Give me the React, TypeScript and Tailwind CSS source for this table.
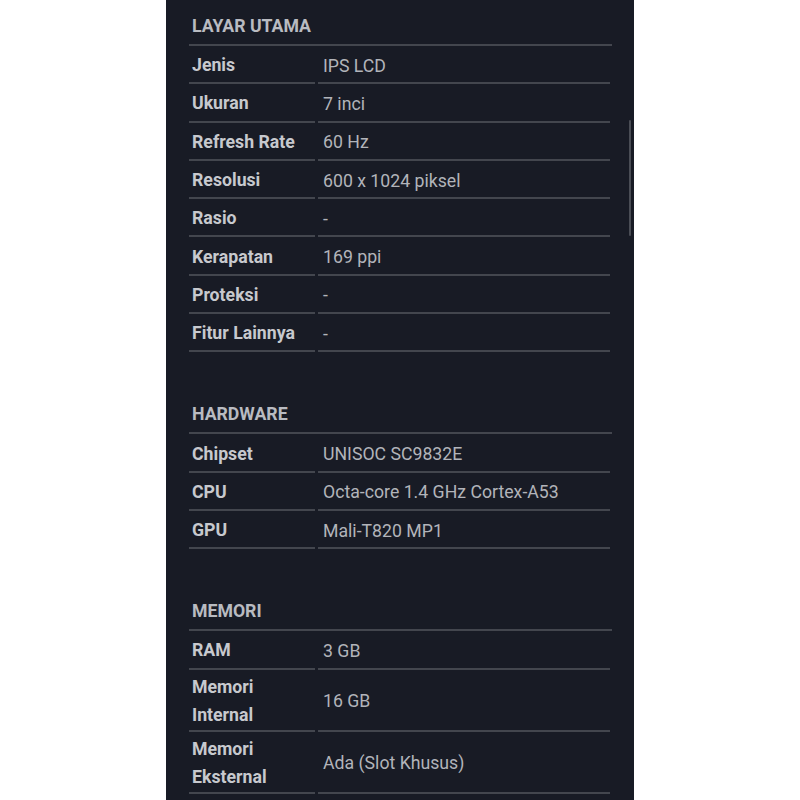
import React from 'react'

type Spec = {
    label: string[]
    value: string
}

type Section = {
    title: string
    rows: Spec[]
}

const sections: Section[] = [
    {
        title: 'LAYAR UTAMA',
        rows: [
            { label: ['Jenis'], value: 'IPS LCD' },
            { label: ['Ukuran'], value: '7 inci' },
            { label: ['Refresh Rate'], value: '60 Hz' },
            { label: ['Resolusi'], value: '600 x 1024 piksel' },
            { label: ['Rasio'], value: '-' },
            { label: ['Kerapatan'], value: '169 ppi' },
            { label: ['Proteksi'], value: '-' },
            { label: ['Fitur Lainnya'], value: '-' },
        ],
    },
    {
        title: 'HARDWARE',
        rows: [
            { label: ['Chipset'], value: 'UNISOC SC9832E' },
            { label: ['CPU'], value: 'Octa-core 1.4 GHz Cortex-A53' },
            { label: ['GPU'], value: 'Mali-T820 MP1' },
        ],
    },
    {
        title: 'MEMORI',
        rows: [
            { label: ['RAM'], value: '3 GB' },
            { label: ['Memori', 'Internal'], value: '16 GB' },
            { label: ['Memori', 'Eksternal'], value: 'Ada (Slot Khusus)' },
        ],
    },
]

function SpecRow({ spec }: { spec: Spec }) {
    return (
        <div className="flex mr-[2px]">
            <div className="w-[126px] shrink-0 border-b-2 border-[#43464e] pl-[3px] pt-[3px] pb-[1px] min-h-[38.3px] flex flex-col justify-center leading-[28px] text-[17.7px] font-bold text-[#c7c9ce]">
                {spec.label.map((l) => (
                    <span key={l} className="whitespace-nowrap">{l}</span>
                ))}
            </div>
            <div className="flex-1 ml-[3px] border-b-2 border-[#43464e] pl-[5px] pt-[3px] flex items-center leading-[28px] text-[17.7px] text-[#b2b4ba]">
                {spec.value}
            </div>
        </div>
    )
}

export default function App() {
    return (
        <div className="w-[800px] h-[800px] bg-white flex justify-center overflow-hidden font-['Roboto',sans-serif]">
            <div className="relative w-[468px] h-full bg-[#181b25] pl-[23px] pr-[22px]">
                {sections.map((section, i) => (
                    <div key={section.title} className={i === 0 ? '' : 'mt-[36px]'}>
                        <div className="pt-[16px] pb-[8px] pl-[3px] border-b-2 border-[#43464e] leading-[20px] text-[17.7px] font-bold text-[#b9bbc1]">
                            {section.title}
                        </div>
                        {section.rows.map((spec) => (
                            <SpecRow key={spec.label.join(' ')} spec={spec} />
                        ))}
                    </div>
                ))}
                {/* scroll thumb */}
                <div className="absolute left-[463px] top-[120px] w-[2px] h-[116px] bg-[#4a4d55] rounded-full" />
            </div>
        </div>
    )
}
